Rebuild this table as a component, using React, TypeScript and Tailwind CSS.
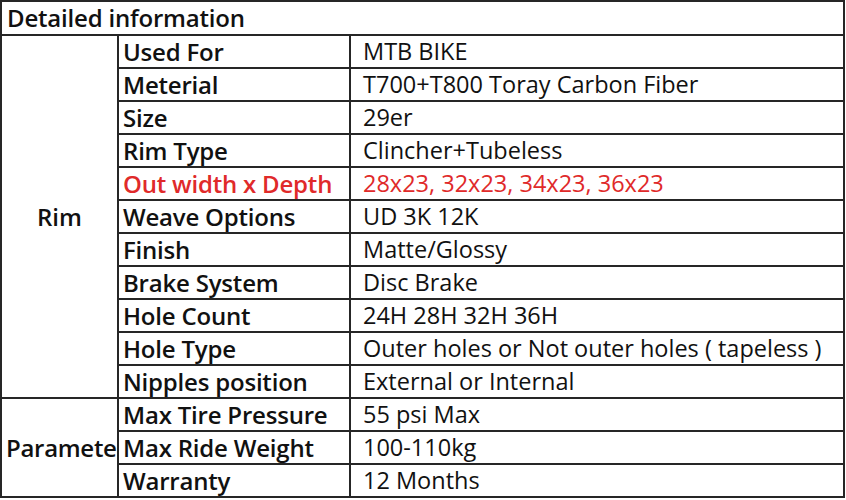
import React from "react";

const rim: [string, string, boolean?][] = [
  ["Used For", "MTB BIKE"],
  ["Meterial", "T700+T800 Toray Carbon Fiber"],
  ["Size", "29er"],
  ["Rim Type", "Clincher+Tubeless"],
  ["Out width x Depth", "28x23, 32x23, 34x23, 36x23", true],
  ["Weave Options", "UD 3K 12K"],
  ["Finish", "Matte/Glossy"],
  ["Brake System", "Disc Brake"],
  ["Hole Count", "24H 28H 32H 36H"],
  ["Hole Type", "Outer holes or Not outer holes ( tapeless )"],
  ["Nipples position", "External or Internal"],
];

const param: [string, string][] = [
  ["Max Tire Pressure", "55 psi Max"],
  ["Max Ride Weight", "100-110kg"],
  ["Warranty", "12 Months"],
];

const cell = "border-2 border-[#262626] h-[33px] p-0 align-middle leading-none";

export default function App() {
  return (
    <div className="w-[846px] h-[500px] bg-white overflow-hidden font-['Open_Sans',sans-serif] text-[#111]">
      <table className="w-[845px] border-collapse table-fixed">
        <colgroup>
          <col className="w-[117px]" />
          <col className="w-[232px]" />
          <col />
        </colgroup>
        <tbody>
          <tr>
            <td colSpan={3} className={`${cell} h-[34px] pl-[5px] text-[24px] font-semibold tracking-[-0.2px]`}>
              Detailed information
            </td>
          </tr>
          {rim.map(([k, v, red], i) => (
            <tr key={k}>
              {i === 0 && (
                <td rowSpan={rim.length} className={`${cell} text-center text-[24px] font-semibold`}>
                  Rim
                </td>
              )}
              <td className={`${cell} pl-[4px] text-[24px] font-semibold whitespace-nowrap tracking-[-0.2px] ${red ? "text-[#e02a2a]" : ""}`}>
                {k}
              </td>
              <td className={`${cell} pl-[12px] text-[23.5px] whitespace-nowrap ${red ? "text-[#e02a2a]" : ""}`}>
                {v}
              </td>
            </tr>
          ))}
          {param.map(([k, v], i) => (
            <tr key={k}>
              {i === 0 && (
                <td rowSpan={param.length} className={`${cell} text-left pl-[4px] text-[24px] font-semibold whitespace-nowrap overflow-hidden tracking-[-0.3px]`}>
                  Paramete
                </td>
              )}
              <td className={`${cell} pl-[4px] text-[24px] font-semibold whitespace-nowrap tracking-[-0.2px]`}>{k}</td>
              <td className={`${cell} pl-[12px] text-[23.5px] whitespace-nowrap`}>{v}</td>
            </tr>
          ))}
        </tbody>
      </table>
    </div>
  );
}
